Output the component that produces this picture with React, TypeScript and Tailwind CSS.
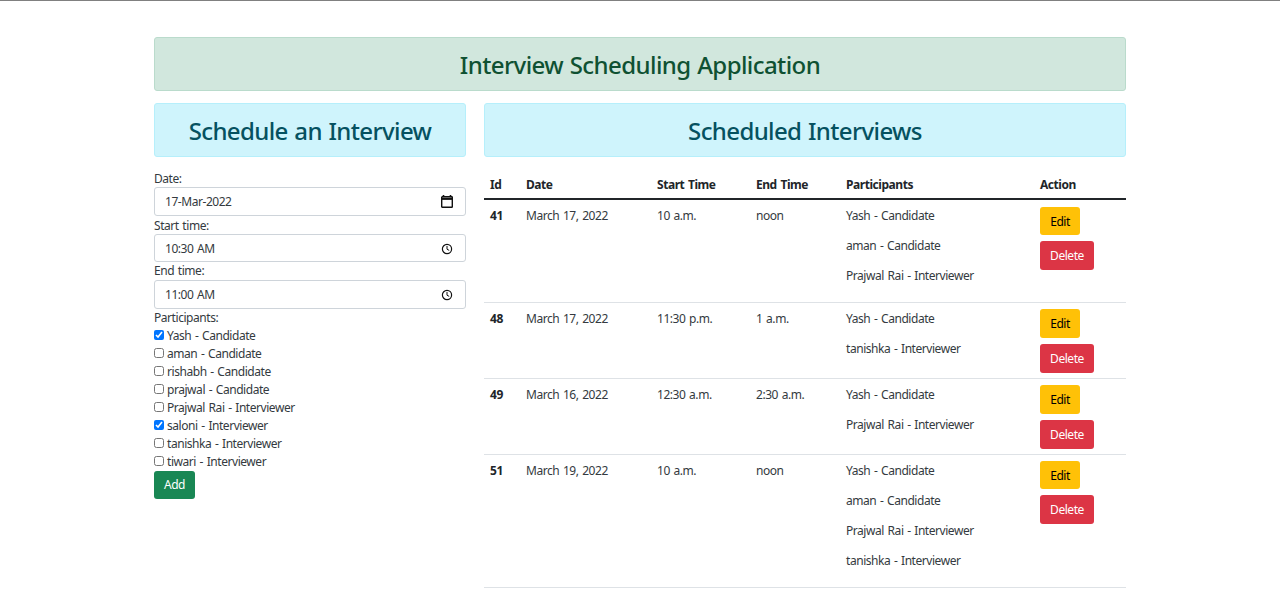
const people = ["Yash - Candidate","aman - Candidate","rishabh - Candidate","prajwal - Candidate","Prajwal Rai - Interviewer","saloni - Interviewer","tanishka - Interviewer","tiwari - Interviewer"];
const checked = [0,5];
const rows = [
  {id:41,date:"March 17, 2022",start:"10 a.m.",end:"noon",p:["Yash - Candidate","aman - Candidate","Prajwal Rai - Interviewer"],h:"h-[103px]",pt:"pt-[7px]",eh:"h-[28px]",dp:"pt-0"},
  {id:48,date:"March 17, 2022",start:"11:30 p.m.",end:"1 a.m.",p:["Yash - Candidate","tanishka - Interviewer"],h:"h-[76px]",pt:"pt-[6px]",eh:"h-[29px]",dp:"pt-[2px]"},
  {id:49,date:"March 16, 2022",start:"12:30 a.m.",end:"2:30 a.m.",p:["Yash - Candidate","Prajwal Rai - Interviewer"],h:"h-[76px]",pt:"pt-[6px]",eh:"h-[29px]",dp:"pt-[2px]"},
  {id:51,date:"March 19, 2022",start:"10 a.m.",end:"noon",p:["Yash - Candidate","aman - Candidate","Prajwal Rai - Interviewer","tanishka - Interviewer"],h:"h-[133px]",pt:"pt-[6px]",eh:"h-[28px]",dp:"pt-[2px]"},
];
function Field({label,value,kind,h,lift}:{label:string;value:string;kind:"date"|"time";h:string;lift?:boolean}){
  return (
    <div>
      <div className={`h-[18px] ${lift ? "leading-[20px]" : "leading-[18px]"}`}>{label}</div>
      <div className={`${h} flex items-center justify-between pl-[10px] pr-[12px] border border-[#ced4da] rounded-[3px] text-[#343a40]`}>
        <span>{value}</span>
        {kind==="date" ? (
          <svg width="12" height="13" viewBox="0 0 12 13" fill="none"><path d="M2.5 0v2M9.5 0v2" stroke="#111" strokeWidth="1.6"/><rect x="0.7" y="1.7" width="10.6" height="10.6" rx="0.6" stroke="#111" strokeWidth="1.4"/><path d="M0.7 3.8h10.6" stroke="#111" strokeWidth="2.2"/></svg>
        ) : (
          <svg width="12" height="12" viewBox="0 0 12 12" fill="none"><circle cx="6" cy="6" r="4.6" stroke="#111" strokeWidth="1.2"/><path d="M6 3v3.2l2.2 1.2" stroke="#111" strokeWidth="1"/></svg>
        )}
      </div>
    </div>
  );
}
export default function App(){
  return (
    <div className="min-h-[601px] bg-white border-t border-[#808080] text-[12px] tracking-[-0.45px] [word-spacing:1px] leading-[19.2px] text-[#343a40] font-['Noto_Sans','Open_Sans',sans-serif]">
      <div className="w-[972px] mx-auto pt-[36px]">
        <div className="h-[54px] pt-[1px] flex items-center justify-center rounded-[3px] bg-[#d1e7dd] border border-[#badbcc] text-[#0f5132] text-[24px] tracking-[-0.58px] font-medium">Interview Scheduling Application</div>
        <div className="flex gap-[18px] mt-[12px]">
          <div className="w-[312px]">
            <div className="h-[54px] pt-[1px] flex items-center justify-center rounded-[3px] bg-[#cff4fc] border border-[#b6effb] text-[#055160] text-[24px] tracking-[-0.62px] font-medium">Schedule an Interview</div>
            <div className="mt-[12px] flex flex-col">
              <Field label="Date:" value="17-Mar-2022" kind="date" h="h-[29px]" lift/>
              <Field label="Start time:" value="10:30 AM" kind="time" h="h-[28px] pt-[1px]" lift/>
              <Field label="End time:" value="11:00 AM" kind="time" h="h-[29px]"/>
            </div>
            <div className="h-[18px] leading-[18px]">Participants:</div>
            <div className="flex flex-col">
              {people.map((p,i)=>(
                <label key={p} className="h-[18px] flex items-center gap-[3px]">
                  <input type="checkbox" defaultChecked={checked.includes(i)} className="w-[10px] h-[10px] m-0 -mt-[2px] accent-[#0075ff]"/>
                  <span>{p}</span>
                </label>
              ))}
            </div>
            <button className="w-[41px] h-[28px] rounded-[3px] bg-[#198754] text-white">Add</button>
          </div>
          <div className="flex-1">
            <div className="h-[54px] pt-[1px] flex items-center justify-center rounded-[3px] bg-[#cff4fc] border border-[#b6effb] text-[#055160] text-[24px] tracking-[-0.62px] font-medium">Scheduled Interviews</div>
            <table className="w-full mt-[13px] table-fixed border-collapse">
              <colgroup><col className="w-[36px]"/><col className="w-[131px]"/><col className="w-[99px]"/><col className="w-[90px]"/><col className="w-[194px]"/><col/></colgroup>
              <thead>
                <tr className="h-[29px] border-b-[2px] border-[#212529] text-left text-[#212529]">
                  {["Id","Date","Start Time","End Time","Participants","Action"].map(h=><th key={h} className="pl-[6px] pt-[2px] font-bold">{h}</th>)}
                </tr>
              </thead>
              <tbody>
                {rows.map(r=>(
                  <tr key={r.id} className={`${r.h} border-b border-[#dee2e6] align-top`}>
                    <td className="pl-[6px] pt-[6px] font-bold text-[#212529]">{r.id}</td>
                    <td className="pl-[6px] pt-[6px]">{r.date}</td>
                    <td className="pl-[6px] pt-[6px]">{r.start}</td>
                    <td className="pl-[6px] pt-[6px]">{r.end}</td>
                    <td className="pl-[6px] pt-[6px]"><div className="flex flex-col gap-[10.8px]">{r.p.map(x=><div key={x}>{x}</div>)}</div></td>
                    <td className={`pl-[6px] ${r.pt}`}>
                      <div className="flex flex-col items-start gap-[6px]">
                        <button className={`w-[40px] ${r.eh} pt-[2px] rounded-[3px] bg-[#ffc107] text-black`}>Edit</button>
                        <button className={`w-[54px] h-[29px] ${r.dp} rounded-[3px] bg-[#dc3545] text-white`}>Delete</button>
                      </div>
                    </td>
                  </tr>
                ))}
              </tbody>
            </table>
          </div>
        </div>
      </div>
    </div>
  );
}
